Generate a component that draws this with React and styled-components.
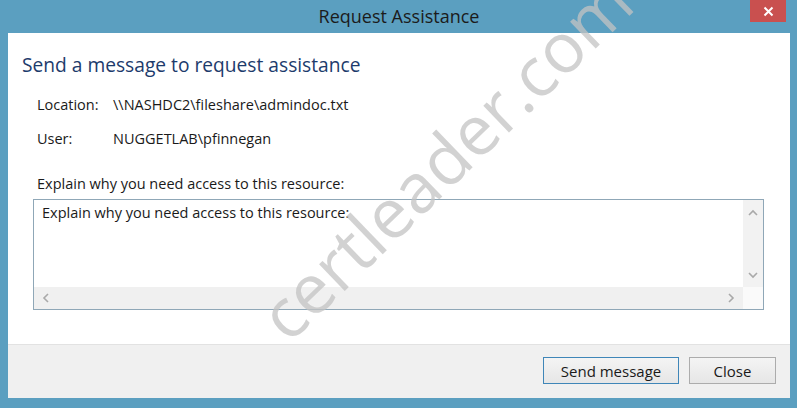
import React from 'react';
import styled, { createGlobalStyle } from 'styled-components';

const GlobalStyle = createGlobalStyle`
  html, body {
    margin: 0;
    padding: 0;
    background: #5b9fc0;
  }
  body {
    font-family: 'Open Sans', 'Noto Sans', 'Liberation Sans', sans-serif;
  }
`;

const Chevron = ({ dir }) => {
  const points = {
    up: '2,7 6,3 10,7',
    down: '2,4 6,8 10,4',
    left: '7,2 3,6 7,10',
    right: '4,2 8,6 4,10',
  }[dir];
  return (
    <svg width='12' height='12' viewBox='0 0 12 12'>
      <polyline points={points} fill='none' stroke='#a9a9a9' strokeWidth='1.6' />
    </svg>
  );
};

const App = () => {
  return (
    <>
      <GlobalStyle />
      <Window>
        <TitleBar>
          <span />
          <Title>Request Assistance</Title>
          <CloseX>
            <svg width='11' height='11' viewBox='0 0 11 11'>
              <path d='M1.5 1.5 L9.5 9.5 M9.5 1.5 L1.5 9.5' stroke='#fff' strokeWidth='2' />
            </svg>
          </CloseX>
        </TitleBar>
        <Client>
          <Content>
            <Heading>Send a message to request assistance</Heading>
            <Details>
              <Row>
                <Key>Location:</Key>
                <Value>\\NASHDC2\fileshare\admindoc.txt</Value>
              </Row>
              <Row>
                <Key>User:</Key>
                <Value>NUGGETLAB\pfinnegan</Value>
              </Row>
            </Details>
            <Prompt>Explain why you need access to this resource:</Prompt>
            <TextBox>
              <TextArea>Explain why you need access to this resource:</TextArea>
              <VScroll>
                <Chevron dir='up' />
                <Chevron dir='down' />
              </VScroll>
              <HScroll>
                <Chevron dir='left' />
                <Chevron dir='right' />
              </HScroll>
              <Corner />
            </TextBox>
          </Content>
          <Footer>
            <Button $primary>Send message</Button>
            <Button $w={87}>Close</Button>
          </Footer>
        </Client>
        <Watermark>certleader.com</Watermark>
      </Window>
    </>
  );
};

export default App;

const Window = styled.div`
  position: relative;
  width: 797px;
  height: 408px;
  box-sizing: border-box;
  padding: 0 7px 10px 8px;
  display: flex;
  flex-direction: column;
  background: #5b9fc0;
  overflow: hidden;
`;

const TitleBar = styled.div`
  height: 33px;
  display: grid;
  grid-template-columns: 1fr auto 1fr;
  align-items: start;
`;

const Title = styled.div`
  margin-top: 4px;
  font-size: 18px;
  color: #1b1b1b;
`;

const CloseX = styled.div`
  justify-self: end;
  margin-right: 4px;
  width: 36px;
  height: 22px;
  background: #c9504f;
  display: flex;
  align-items: center;
  justify-content: center;
`;

const Client = styled.div`
  flex: 1;
  display: flex;
  flex-direction: column;
  background: #fff;
`;

const Content = styled.div`
  flex: 1;
  padding: 19px 26px 0 14px;
  display: flex;
  flex-direction: column;
`;

const Heading = styled.div`
  font-size: 19.2px;
  line-height: 26px;
  color: #1d3b6c;
`;

const Details = styled.div`
  margin-top: 17px;
  padding-left: 15px;
  display: flex;
  flex-direction: column;
  gap: 14px;
`;

const Row = styled.div`
  display: flex;
  font-size: 14.5px;
  line-height: 20px;
  color: #1a1a1a;
`;

const Key = styled.div`
  width: 76px;
`;

const Value = styled.div``;

const Prompt = styled.div`
  margin-top: 25px;
  padding-left: 15px;
  font-size: 14.5px;
  line-height: 20px;
  color: #1a1a1a;
`;

const TextBox = styled.div`
  margin: 5px 0 0 11px;
  height: 111px;
  box-sizing: border-box;
  border: 1px solid #8fa7b7;
  display: grid;
  grid-template-columns: 1fr 20px;
  grid-template-rows: 1fr 22px;
`;

const TextArea = styled.div`
  padding: 3px 8px;
  font-size: 14.5px;
  line-height: 20px;
  color: #1a1a1a;
`;

const VScroll = styled.div`
  background: #f2f2f2;
  display: flex;
  flex-direction: column;
  justify-content: space-between;
  align-items: center;
  padding: 8px 0 6px;
`;

const HScroll = styled.div`
  background: #f0f0f0;
  display: flex;
  justify-content: space-between;
  align-items: center;
  padding: 0 6px 0 7px;
`;

const Corner = styled.div`
  background: #fafafa;
`;

const Footer = styled.div`
  height: 54px;
  box-sizing: border-box;
  background: #f0f0f0;
  border-top: 1px solid #e2e2e2;
  display: flex;
  justify-content: flex-end;
  align-items: center;
  gap: 10px;
  padding: 0 14px 2px 0;
`;

const Button = styled.div`
  width: ${(p) => (p.$w ? `${p.$w}px` : '136px')};
  height: 27px;
  box-sizing: border-box;
  border: 1px solid ${(p) => (p.$primary ? '#3f86b8' : '#acacac')};
  background: linear-gradient(#f4f4f4, #e6e6e6);
  display: flex;
  align-items: center;
  justify-content: center;
  font-size: 15px;
  color: #1a1a1a;
`;

const Watermark = styled.div`
  position: absolute;
  left: 202px;
  top: 110px;
  font-family: 'Open Sans', 'Noto Sans', sans-serif;
  font-size: 69px;
  color: rgba(195, 195, 195, 0.75);
  transform: rotate(-44deg);
  transform-origin: center;
  pointer-events: none;
  white-space: nowrap;
`;
